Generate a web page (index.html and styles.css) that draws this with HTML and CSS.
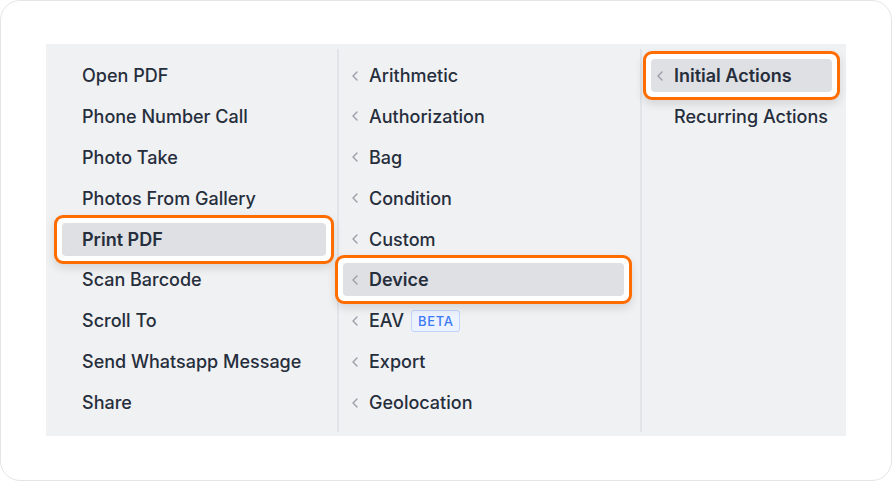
FILE: index.html
```html
<!DOCTYPE html>
<html>
<head>
<meta charset="utf-8">
<link rel="stylesheet" href="styles.css">
</head>
<body>
<div class="card">
  <div class="panel">
    <div class="col col1">
      <div class="item">Open PDF</div>
      <div class="item">Phone Number Call</div>
      <div class="item">Photo Take</div>
      <div class="item">Photos From Gallery</div>
      <div class="mark"><div class="item active">Print PDF</div></div>
      <div class="item">Scan Barcode</div>
      <div class="item">Scroll To</div>
      <div class="item">Send Whatsapp Message</div>
      <div class="item">Share</div>
    </div>
    <div class="col col2">
      <div class="item"><svg class="chev" viewBox="0 0 6 10"><path d="M5 1 1 5l4 4"/></svg>Arithmetic</div>
      <div class="item"><svg class="chev" viewBox="0 0 6 10"><path d="M5 1 1 5l4 4"/></svg>Authorization</div>
      <div class="item"><svg class="chev" viewBox="0 0 6 10"><path d="M5 1 1 5l4 4"/></svg>Bag</div>
      <div class="item"><svg class="chev" viewBox="0 0 6 10"><path d="M5 1 1 5l4 4"/></svg>Condition</div>
      <div class="item"><svg class="chev" viewBox="0 0 6 10"><path d="M5 1 1 5l4 4"/></svg>Custom</div>
      <div class="mark"><div class="item active"><svg class="chev" viewBox="0 0 6 10"><path d="M5 1 1 5l4 4"/></svg>Device</div></div>
      <div class="item"><svg class="chev" viewBox="0 0 6 10"><path d="M5 1 1 5l4 4"/></svg>EAV<span class="badge">BETA</span></div>
      <div class="item"><svg class="chev" viewBox="0 0 6 10"><path d="M5 1 1 5l4 4"/></svg>Export</div>
      <div class="item"><svg class="chev" viewBox="0 0 6 10"><path d="M5 1 1 5l4 4"/></svg>Geolocation</div>
    </div>
    <div class="col col3">
      <div class="mark"><div class="item active"><svg class="chev" viewBox="0 0 6 10"><path d="M5 1 1 5l4 4"/></svg>Initial Actions</div></div>
      <div class="item"><span class="chev-space"></span>Recurring Actions</div>
    </div>
  </div>
</div>
</body>
</html>
```

FILE: styles.css
```css
* { box-sizing: border-box; }
html, body { margin: 0; padding: 0; background: #ffffff; }
body {
  font-family: Inter, "Noto Sans", "Liberation Sans", sans-serif;
  width: 892px;
  height: 481px;
}
.card {
  width: 892px;
  height: 481px;
  border: 1px solid #e3e5e8;
  border-radius: 20px;
  padding: 43px 45px 44px 45px;
  background: #ffffff;
}
.panel {
  width: 800px;
  height: 392px;
  background: #f0f1f3;
  display: flex;
  padding: 5px 0 4px 0;
}
.col {
  display: flex;
  flex-direction: column;
  gap: 7.9px;
  padding-top: 10px;
}
.col1 { width: 291px; padding-left: 16px; padding-right: 11px; }
.col2 { width: 303px; padding-left: 4px; padding-right: 16px; border-left: 2px solid #e3e4e7; }
.col3 { width: 206px; padding-left: 9px; padding-right: 14px; border-left: 2px solid #e3e4e7; }
.item {
  height: 33px;
  display: flex;
  align-items: center;
  font-size: 18px;
  font-weight: 500;
  color: #262e3c;
  border-radius: 4px;
  white-space: nowrap;
}
.col1 .item { padding-left: 20px; }
.col2 .item { padding-left: 9px; }
.col3 .item { padding-left: 6px; }
.item.active {
  background: #dfe0e4;
  font-weight: 600;
}
.mark {
  margin: -8px;
  border: 3px solid #ff6c00;
  border-radius: 9px;
  padding: 5px;
  background: #ffffff;
  box-shadow: 0 4px 10px rgba(0, 0, 0, 0.12);
  position: relative;
}
.chev {
  width: 6px;
  height: 10px;
  margin-right: 11px;
  flex: none;
  fill: none;
  stroke: #9a9ea6;
  stroke-width: 1.4;
  stroke-linecap: round;
  stroke-linejoin: round;
}
.chev-space { width: 17px; flex: none; }
.badge {
  margin-left: 7px;
  height: 22px;
  padding: 0 6px;
  display: inline-flex;
  align-items: center;
  border: 1px solid #c0d3fb;
  background: #edf3fe;
  color: #3d7af5;
  font-size: 13px;
  font-weight: 500;
  letter-spacing: 0.6px;
  border-radius: 3px;
}
```
